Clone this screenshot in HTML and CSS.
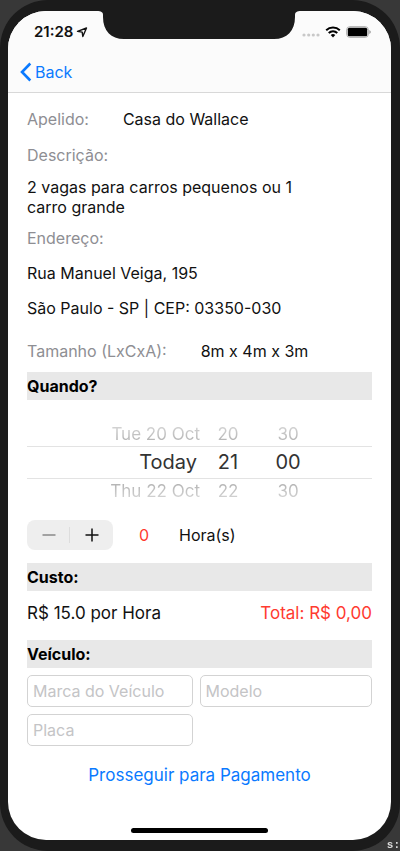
FILE: index.html
```html
<!DOCTYPE html>
<html lang="pt-BR">
<head>
<meta charset="utf-8">
<meta name="viewport" content="width=device-width, initial-scale=1">
<title>Reserva de vaga</title>
<link rel="stylesheet" href="styles.css">
</head>
<body>
<span class="behind">s:</span>
<div class="phone">
  <div class="screen">
    <svg class="notch" viewBox="0 0 204 28" aria-hidden="true"><path d="M0 0H204C200 0 198 1 198 4V6C198 20 190 28 177 28H27C14 28 6 20 6 6V4C6 1 4 0 0 0Z"/></svg>
    <header class="top">
      <div class="status">
        <span class="clock">21:28
          <svg class="arrow" viewBox="0 0 12 12" aria-hidden="true"><path d="M1.5 5.4L10.5 2L6.8 10.5L6.2 6.1Z"/></svg>
        </span>
        <span class="indicators">
          <svg class="dots" viewBox="0 0 18 4" aria-hidden="true"><circle cx="2" cy="2" r="1.6"/><circle cx="6.7" cy="2" r="1.6"/><circle cx="11.3" cy="2" r="1.6"/><circle cx="16" cy="2" r="1.6"/></svg>
          <svg class="wifi" viewBox="0 0 16 12" aria-hidden="true"><path d="M1.2 4.3C5 .7 11 .7 14.8 4.3M3.7 7C6.2 4.8 9.8 4.8 12.3 7"/><path class="wifi-dot" d="M5.7 9Q8 7.2 10.3 9L8 11.5Z"/></svg>
          <svg class="battery" viewBox="0 0 25 12" aria-hidden="true"><rect class="shell" x=".7" y=".7" width="21.6" height="10.6" rx="3"/><rect x="1.8" y="1.8" width="19.4" height="8.4" rx="1.5"/><path class="cap" d="M23.2 4Q25 5 25 6T23.2 8Z"/></svg>
        </span>
      </div>
      <nav class="nav">
        <a class="back" href="#"><svg class="chevron" viewBox="0 0 12 20" aria-hidden="true"><path d="M10.3 1.5L2 10L10.3 18.5"/></svg>Back</a>
      </nav>
    </header>
    <main class="content">
      <dl class="details">
        <div class="pair"><dt>Apelido:</dt><dd>Casa do Wallace</dd></div>
        <dt>Descrição:</dt>
        <dd class="description">2 vagas para carros pequenos ou 1 carro grande</dd>
        <dt>Endereço:</dt>
        <dd class="street">Rua Manuel Veiga, 195</dd>
        <dd class="city">São Paulo - SP | CEP: 03350-030</dd>
        <div class="pair size"><dt>Tamanho (LxCxA):</dt><dd>8m x 4m x 3m</dd></div>
      </dl>
      <h2>Quando?</h2>
      <div class="picker" role="group" aria-label="Data e hora">
        <div class="wheel before"><span>Tue 20 Oct</span><span>20</span><span>30</span></div>
        <div class="wheel chosen"><span>Today</span><span>21</span><span>00</span></div>
        <div class="wheel after"><span>Thu 22 Oct</span><span>22</span><span>30</span></div>
      </div>
      <div class="duration">
        <div class="stepper">
          <button type="button" aria-label="Menos" disabled><svg viewBox="0 0 14 14" aria-hidden="true"><path d="M.5 7H13.5"/></svg></button>
          <button type="button" aria-label="Mais"><svg viewBox="0 0 14 14" aria-hidden="true"><path d="M.5 7H13.5M7 .5V13.5"/></svg></button>
        </div>
        <output class="hours">0</output>
        <span>Hora(s)</span>
      </div>
      <h2>Custo:</h2>
      <div class="cost"><span>R$ 15.0 por Hora</span><span class="total">Total: R$ 0,00</span></div>
      <h2>Veículo:</h2>
      <form class="vehicle">
        <input type="text" aria-label="Marca do Veículo" placeholder="Marca do Veículo">
        <input type="text" aria-label="Modelo" placeholder="Modelo">
        <input type="text" aria-label="Placa" placeholder="Placa">
      </form>
      <button class="proceed" type="button">Prosseguir para Pagamento</button>
    </main>
    <div class="home"></div>
  </div>
</div>
</body>
</html>
```
FILE: styles.css
```css
* {
  box-sizing: border-box;
}

body {
  margin: 0;
  background: #383838;
  color: #111;
  font: 16px/20px Inter, "Liberation Sans", sans-serif;
}

.behind {
  position: fixed;
  z-index: 1;
  right: 0;
  bottom: 0;
  color: #ddd;
  font: bold 11px/12px "Liberation Mono", monospace;
}

.phone {
  position: relative;
  display: flex;
  min-height: 100vh;
  padding: 11px 9px 11px 8px;
  border-radius: 48px;
  background: #1b1b1b;
}

.screen {
  position: relative;
  display: flex;
  flex: 1;
  flex-direction: column;
  overflow: hidden;
  border-radius: 38px;
  background: #fff;
}

.notch {
  position: absolute;
  top: 0;
  left: 50%;
  width: 204px;
  margin-left: -103px;
  fill: #1b1b1b;
}

.top {
  border-bottom: 1px solid #d8d8d8;
  background: #fbfbfb;
}

.status {
  display: flex;
  justify-content: space-between;
  padding: 11px 20px 0 26px;
}

.clock {
  display: flex;
  align-items: center;
  gap: 3px;
  font-size: 15px;
  font-weight: 600;
}

.arrow {
  width: 12px;
  fill: none;
  stroke: #111;
  stroke-width: 1.4;
  stroke-linejoin: round;
}

.indicators {
  display: flex;
  align-items: center;
  gap: 5px;
}

.dots {
  width: 18px;
  margin-top: 6px;
  fill: #c8c8c8;
}

.wifi {
  width: 16px;
  fill: none;
  stroke: #000;
  stroke-width: 2;
}

.wifi-dot {
  fill: #000;
  stroke: none;
}

.battery {
  width: 25px;
}

.shell {
  fill: none;
  stroke: #aaa;
  stroke-width: 1;
}

.cap {
  fill: #aaa;
}

.nav {
  display: flex;
  padding: 20px 12px 10px;
}

.back {
  display: flex;
  align-items: center;
  gap: 3px;
  color: #0a7aff;
  text-decoration: none;
}

.chevron {
  width: 12px;
  fill: none;
  stroke: #0a7aff;
  stroke-width: 2.6;
}

.content {
  display: flex;
  flex-direction: column;
  padding: 16px 19px 0;
}

.details,
.details dd {
  margin: 0;
}

.details dt {
  color: #8e8e93;
}

.pair {
  display: flex;
  gap: 34px;
  margin-bottom: 16px;
}

.details .description {
  max-width: 280px;
  margin: 12px 0 11px;
}

.details .street,
.details .city {
  margin-top: 15px;
}

.size {
  margin: 23px 0 11px;
}

h2 {
  margin: 0;
  padding: 4px 0;
  background: #e8e8e8;
  color: #000;
  font-size: 16px;
  font-weight: 700;
  line-height: 20px;
}

.picker {
  margin: 22px 0 17px;
}

.wheel {
  display: grid;
  grid-template-columns: 173px 22px 28px;
  column-gap: 17px;
  height: 24px;
  font-size: 17px;
  line-height: 24px;
}

.wheel span {
  text-align: center;
  white-space: nowrap;
}

.wheel span:first-child {
  text-align: right;
}

.wheel span:last-child {
  margin-left: 18px;
  margin-right: -18px;
}

.before {
  background: linear-gradient(#ddd, #aaa) text;
  color: transparent;
}

.after {
  background: linear-gradient(#aaa, #ddd) text;
  color: transparent;
}

.wheel.chosen {
  height: 33px;
  border: solid #e3e3e3;
  border-width: 1px 0;
  color: #333;
  font-size: 20px;
  line-height: 31px;
}

.chosen span:first-child {
  padding-right: 3px;
}

.duration {
  display: flex;
  align-items: center;
  margin-bottom: 13px;
}

.stepper {
  display: flex;
  border-radius: 8px;
  background: #eee;
}

.stepper button {
  display: flex;
  align-items: center;
  justify-content: center;
  width: 43px;
  height: 30px;
  margin: 0;
  padding: 0;
  border: 0;
  background: none;
  color: #111;
}

.stepper button:disabled {
  background: linear-gradient(#ddd, #ddd) right / 1px 16px no-repeat;
  color: #888;
}

.stepper svg {
  width: 14px;
  stroke: currentColor;
  stroke-width: 1.5;
}

.hours {
  width: 40px;
  margin-left: 26px;
}

.hours,
.total {
  color: #ff3b30;
}

.cost {
  display: flex;
  justify-content: space-between;
  padding: 12px 0 17px;
  font-size: 17px;
}

.vehicle {
  display: grid;
  grid-template-columns: 166fr 173fr;
  gap: 7px;
  margin: 7px 0 19px;
}

input {
  width: 100%;
  min-width: 0;
  height: 32px;
  padding: 0 5px;
  border: 1px solid #d3d3d3;
  border-radius: 5px;
  background: #fff;
  font: inherit;
}

input::placeholder {
  color: #c4c4c6;
}

.proceed {
  align-self: center;
  padding: 0;
  border: 0;
  background: none;
  color: #0a7aff;
  font: inherit;
  font-size: 17px;
}

.home {
  width: 137px;
  height: 5px;
  margin: auto auto 7px;
  border-radius: 3px;
  background: #000;
}
```
